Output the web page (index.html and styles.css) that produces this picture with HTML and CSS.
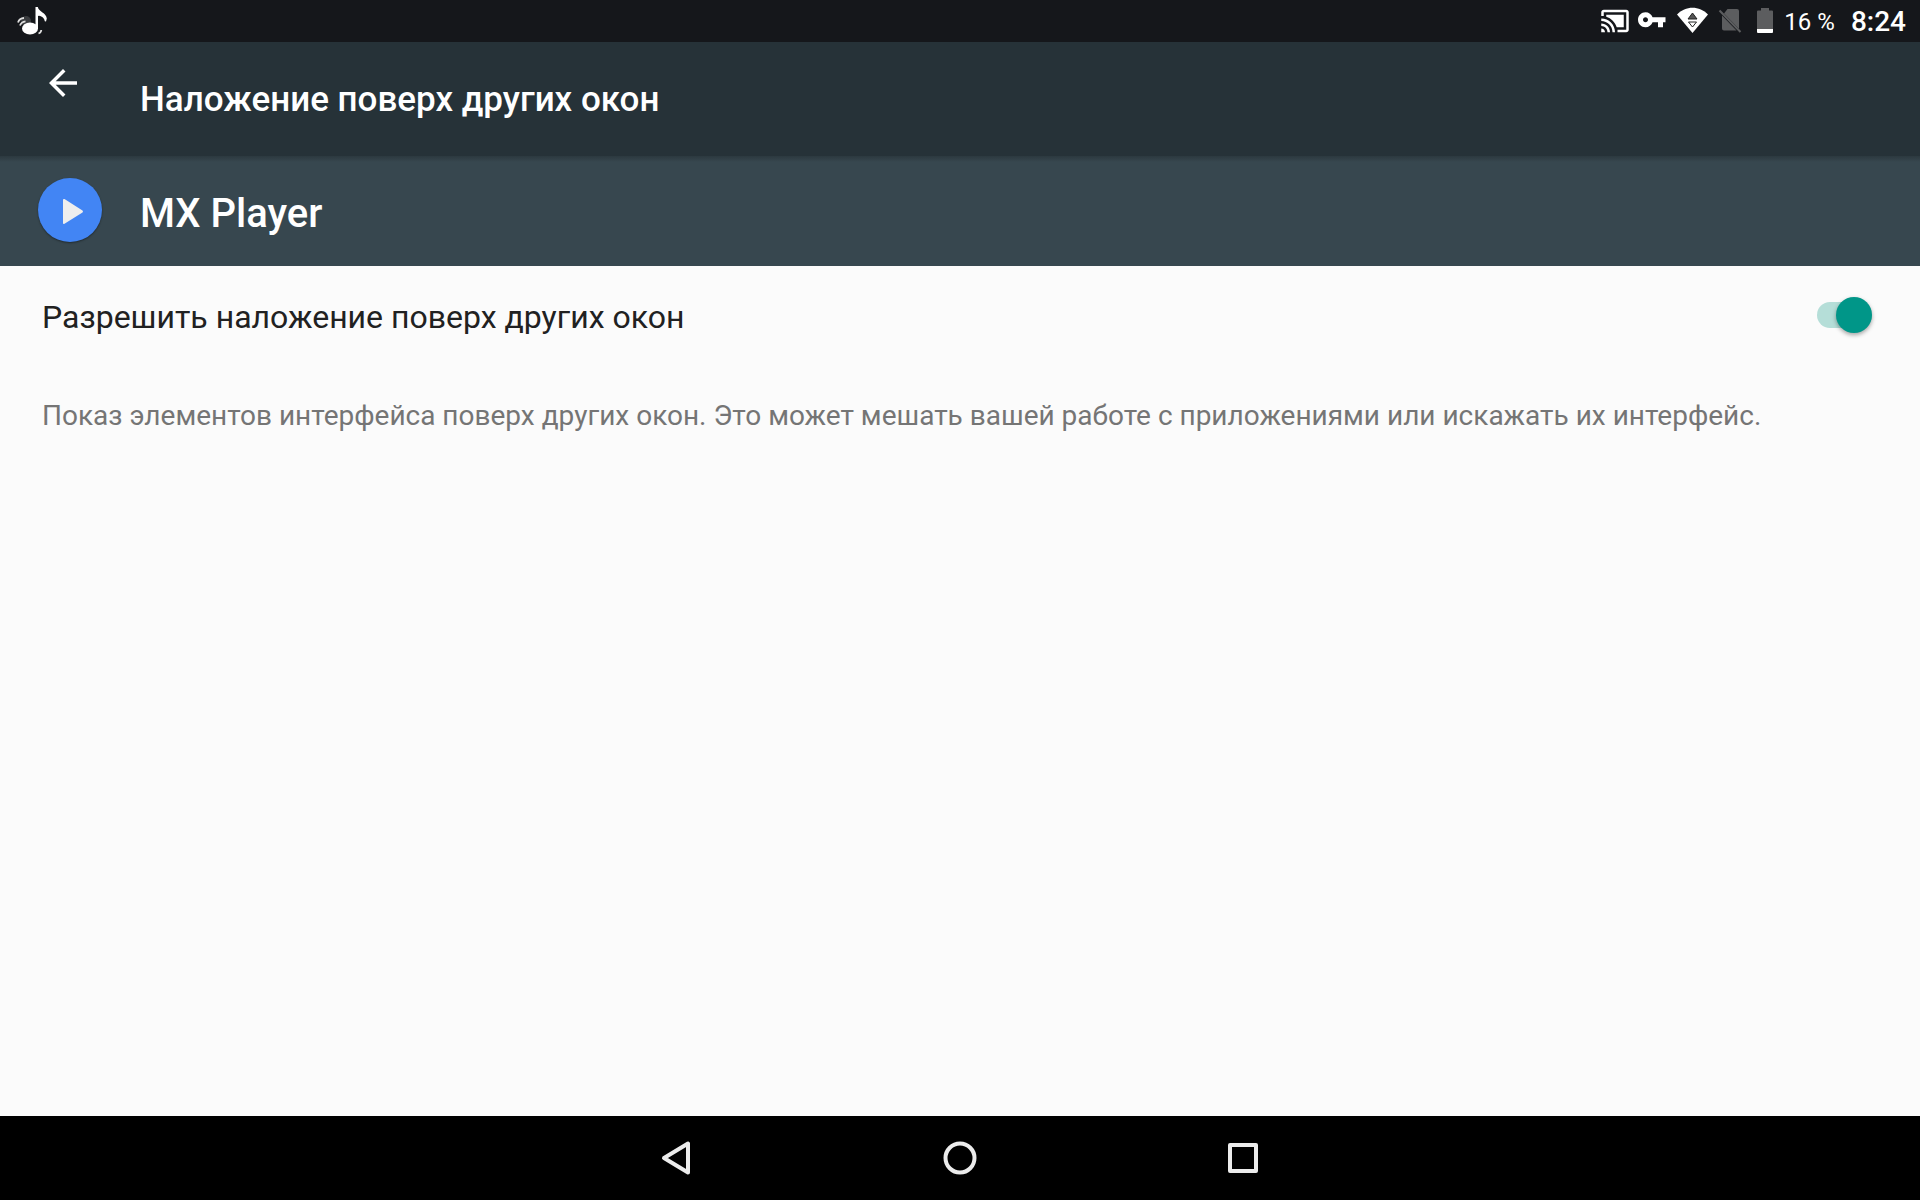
FILE: index.html
```html
<!DOCTYPE html>
<html lang="ru">
<head>
    <meta charset="UTF-8">
    <meta name="viewport" content="width=device-width, initial-scale=1.0">
    <title>Наложение поверх других окон</title>
    <link rel="stylesheet" href="styles.css">
</head>
<body>
    <div class="status-bar">
        <svg class="note-icon" viewBox="0 0 32 30" width="32" height="30">
            <ellipse cx="10" cy="15" rx="5" ry="5" fill="#3a3c3f"/>
            <ellipse cx="14" cy="22.500" rx="8" ry="6" fill="#fff"/>
            <path d="M19.500 1h2.300c1 5 8.500 5.500 9 11.500l-.8 3-1.200-.3c-.5-4-4-5.200-6.800-5.400V23h-2.500z" fill="#fff"/>
            <path d="M2 16.500c.8-2.500 3-4.300 6-4.500M4 19.500c.8-2.300 2.800-3.900 5.500-4.200M22.500 27.500c1.800-.5 2.600-1.700 2.800-3.500" fill="none" stroke="#ddd" stroke-width="1.800"/>
        </svg>
        <div class="status-icons">
            <svg viewBox="0 0 24 24" width="30" height="30" fill="#fff">
                <path d="M1 18v3h3c0-1.660-1.340-3-3-3zm0-4v2c2.760 0 5 2.240 5 5h2c0-3.870-3.130-7-7-7zm18-7H5v1.630c3.960 1.280 7.090 4.410 8.370 8.370H19V7zM1 10v2c4.970 0 9 4.030 9 9h2c0-6.080-4.930-11-11-11zm20-7H3c-1.100 0-2 .9-2 2v3h2V5h18v14h-7v2h7c1.100 0 2-.9 2-2V5c0-1.100-.9-2-2-2z"/>
            </svg>
            <svg viewBox="1 1 24 24" width="30" height="30" fill="#fff">
                <path d="M12.650 10C11.830 7.670 9.610 6 7 6c-3.310 0-6 2.690-6 6s2.690 6 6 6c2.610 0 4.830-1.670 5.650-4H17v4h4v-4h2v-4H12.650zM7 14c-1.100 0-2-.9-2-2s.9-2 2-2 2 .9 2 2-.9 2-2 2z"/>
            </svg>
            <svg viewBox="0 0 32 30" width="32" height="30">
                <path d="M1 8.500C9.500-.5 23.500-.5 32 8.500L16.500 27z" fill="#fff"/>
                <path d="M16.500 7l4.500 6h-9z" fill="#555" stroke="#222" stroke-width="1"/>
                <path d="M12.500 16h8l-4 5z" fill="#fff" stroke="#222" stroke-width="1"/>
            </svg>
            <svg viewBox="1 0 30 30" width="30" height="30">
                <path d="M12.500 3H22q2 0 2 2v18L9 7.500zM7 9.500L21.500 24.500H9q-2 0-2-2z" fill="#5c5d5f"/>
                <path d="M4.500 4.500L25.500 26" stroke="#5c5d5f" stroke-width="2"/>
            </svg>
            <svg viewBox="0 0 22 30" width="22" height="30">
                <path d="M7 2h8v2.500h3q1 0 1 1V24H3V5.500q0-1 1-1h3z" fill="#5c5d5f"/>
                <path d="M3 23h16v3q0 1-1 1H4q-1 0-1-1z" fill="#fff"/>
            </svg>
            <span class="battery-level">16 %</span>
            <span class="clock">8:24</span>
        </div>
    </div>

    <header class="toolbar">
        <button class="back-btn" type="button" aria-label="Назад">
            <svg viewBox="0 0 24 24" width="42" height="42" fill="#fff">
                <path d="M20 11H7.830l5.590-5.590L12 4l-8 8 8 8 1.410-1.410L7.830 13H20v-2z"/>
            </svg>
        </button>
        <h1>Наложение поверх других окон</h1>
    </header>

    <section class="app-header">
        <div class="app-icon">
            <svg viewBox="0 0 64 64" width="64" height="64">
                <path d="M25 22v23q0 1.500 1.500.8L44.500 34.500q1-1 0-2L26.500 21q-1.500-.5-1.500 1z" fill="#eee"/>
            </svg>
        </div>
        <h2>MX Player</h2>
    </section>

    <main class="content">
        <div class="setting">
            <label for="overlay">Разрешить наложение поверх других окон</label>
            <input class="switch" type="checkbox" id="overlay" checked>
        </div>
        <p class="description">Показ элементов интерфейса поверх других окон. Это может мешать вашей работе с приложениями или искажать их интерфейс.</p>
    </main>

    <nav class="nav-bar">
        <button type="button" aria-label="Назад">
            <svg viewBox="0 0 40 40" width="40" height="40">
                <path d="M7 20L31 5.500v29z"/>
            </svg>
        </button>
        <button type="button" aria-label="Главный экран">
            <svg viewBox="0 0 40 40" width="40" height="40">
                <circle cx="20" cy="20" r="14.500"/>
            </svg>
        </button>
        <button type="button" aria-label="Недавние приложения">
            <svg viewBox="0 0 40 40" width="40" height="40">
                <rect x="7" y="7" width="26" height="26"/>
            </svg>
        </button>
    </nav>
</body>
</html>
```

FILE: styles.css
```css
* {
    margin: 0;
    padding: 0;
    box-sizing: border-box;
}

body {
    display: flex;
    flex-direction: column;
    min-height: 100vh;
    font-family: Roboto, "Noto Sans", sans-serif;
    background: #fbfbfb;
    color: #212121;
}

svg {
    display: block;
}

button {
    border: none;
    background: none;
    cursor: pointer;
}

/* status bar */
.status-bar {
    display: flex;
    justify-content: space-between;
    align-items: center;
    height: 42px;
    padding: 0 14px 0 16px;
    background: #15171b;
    color: #fff;
}

.status-icons {
    display: flex;
    align-items: center;
    gap: 8px;
}

.battery-level,
.clock {
    padding-top: 2px;
    line-height: 30px;
}

.battery-level {
    font-size: 24px;
}

.clock {
    margin-left: 8px;
    font-size: 28px;
    font-weight: 500;
}

/* headers */
.toolbar {
    display: flex;
    align-items: center;
    height: 114px;
    background: #263238;
    color: #fff;
}

.back-btn {
    align-self: flex-start;
    width: 140px;
    padding: 20px 42px;
}

.toolbar h1 {
    font-size: 35px;
    font-weight: 500;
}

.app-header {
    display: flex;
    align-items: center;
    gap: 38px;
    height: 110px;
    padding: 0 38px 2px;
    background: linear-gradient(#2c393f, #37474f 6px);
    color: #fff;
}

.app-icon {
    border-radius: 50%;
    background: #4285f4;
    box-shadow: 0 1px 2px rgba(0, 0, 0, 0.4);
}

.app-header h2 {
    padding-top: 6px;
    font-size: 40px;
    font-weight: 500;
}

/* content */
.content {
    flex: 1;
    padding: 0 42px;
}

.setting {
    display: flex;
    justify-content: space-between;
    align-items: center;
    height: 100px;
    padding-bottom: 2px;
}

.setting label {
    padding-top: 4px;
    font-size: 32px;
}

.switch {
    appearance: none;
    display: flex;
    align-items: center;
    justify-content: flex-end;
    width: 55px;
    height: 26px;
    margin-right: 6px;
    border-radius: 13px;
    background: #b5ded8;
    cursor: pointer;
}

.switch::before {
    content: "";
    width: 36px;
    height: 36px;
    flex-shrink: 0;
    border-radius: 50%;
    background: #009688;
    box-shadow: 0 2px 4px rgba(0, 0, 0, 0.35);
}

.switch:not(:checked) {
    justify-content: flex-start;
    background: #bdbdbd;
}

.switch:not(:checked)::before {
    background: #f1f1f1;
}

.description {
    padding: 32px 0;
    font-size: 28px;
    line-height: 36px;
    color: #757575;
}

/* navigation bar */
.nav-bar {
    display: flex;
    justify-content: center;
    height: 84px;
    background: #000;
}

.nav-bar button {
    display: flex;
    align-items: center;
    justify-content: center;
    width: 283px;
}

.nav-bar svg {
    fill: none;
    stroke: #ececec;
    stroke-width: 4;
    stroke-linejoin: round;
}
```
